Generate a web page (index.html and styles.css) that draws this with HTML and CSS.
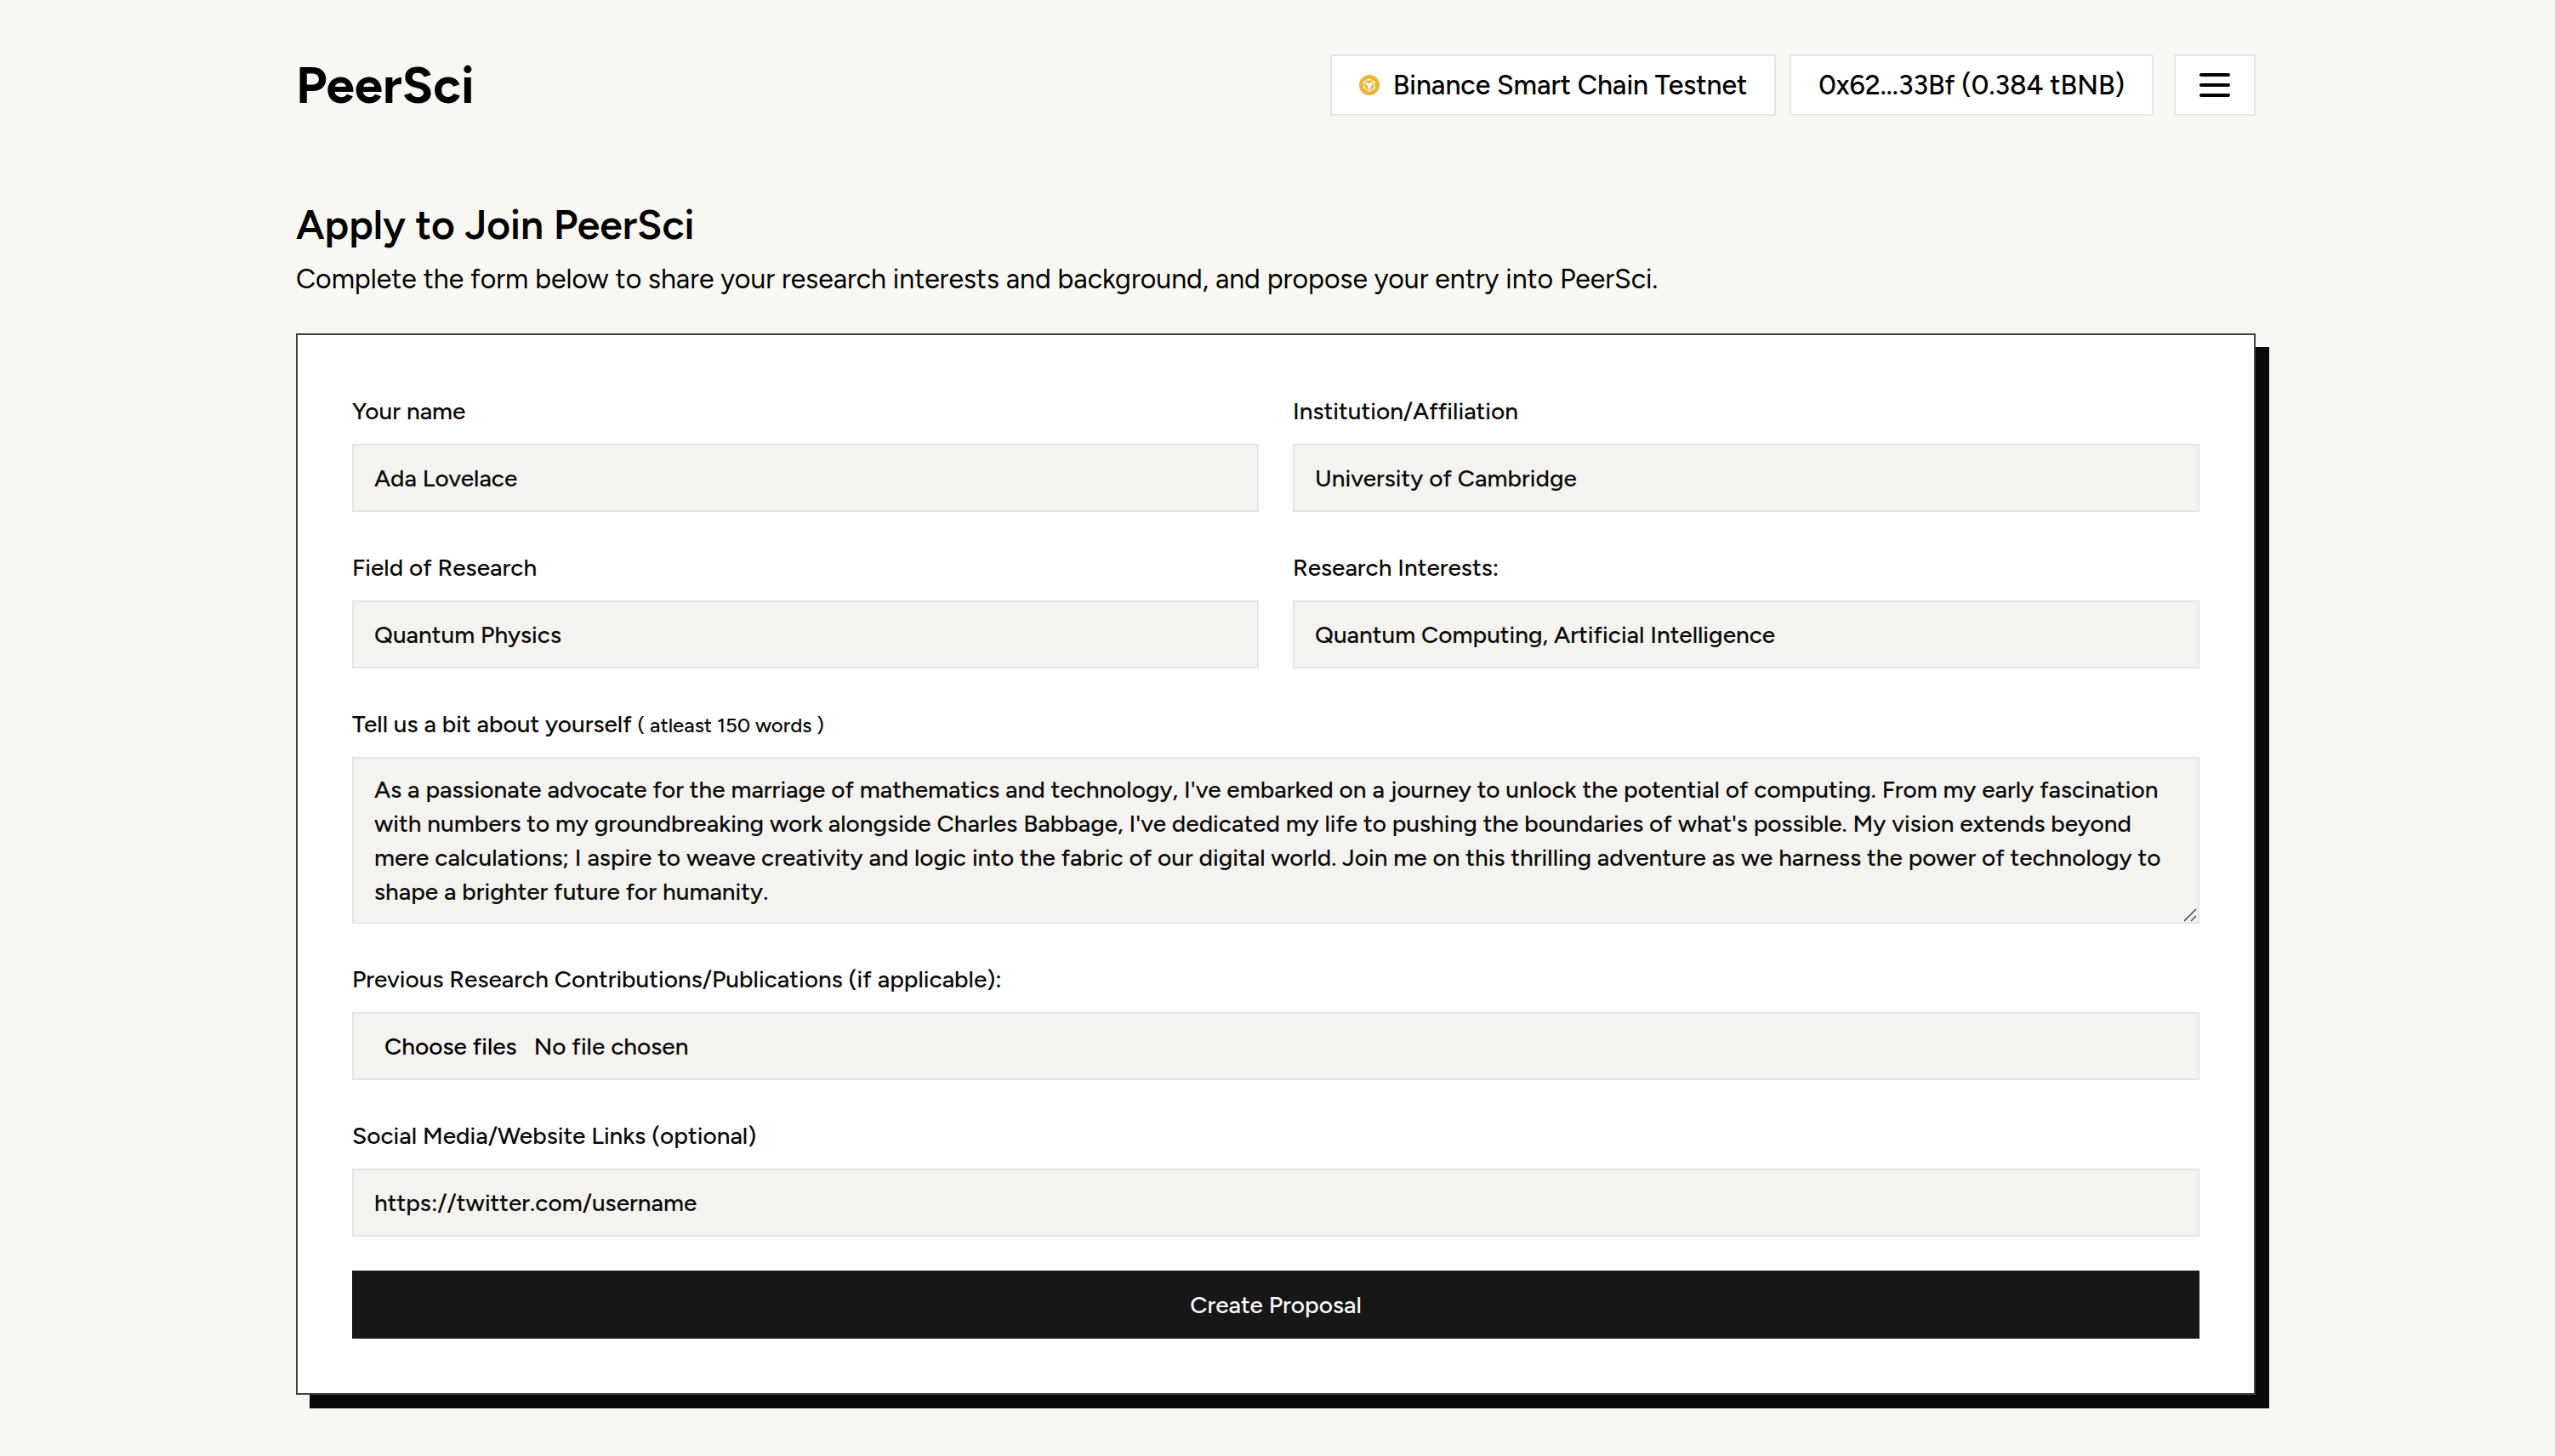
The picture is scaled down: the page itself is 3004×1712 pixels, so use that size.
FILE: index.html
```html
<!DOCTYPE html>
<html lang="en">
<head>
<meta charset="utf-8">
<meta name="viewport" content="width=device-width, initial-scale=1">
<title>PeerSci</title>
<link rel="stylesheet" href="styles.css">
</head>
<body>
<div class="page">
  <header class="header">
    <a class="logo" href="#">PeerSci</a>
    <nav class="nav">
      <div class="wallet">
        <button class="pill" type="button">
          <svg class="coin" viewBox="0 0 24 24" aria-hidden="true">
            <circle cx="12" cy="12" r="12" fill="#e8b73d"/>
            <path d="M12 5 18 8.500V15.500L12 19 6 15.500V8.500Z" fill="none" stroke="#fff" stroke-width="1.400" stroke-dasharray="5.900 1.050" stroke-dashoffset="2.950"/>
            <path d="M8 9.600 9.800 8.900 12 10.200 14.200 8.900 16 9.600V11.400L13.700 12.800V15.800L12 16.800 10.300 15.800V12.800L8 11.400Z" fill="#fff"/>
          </svg>
          <span>Binance Smart Chain Testnet</span>
        </button>
        <button class="pill" type="button">0x62...33Bf (0.384 tBNB)</button>
      </div>
      <button class="pill menu" type="button" aria-label="Menu">
        <svg class="bars" viewBox="0 0 48 48" aria-hidden="true">
          <path d="M8 12H40M8 24H40M8 36H40" fill="none" stroke="#000" stroke-width="4" stroke-linecap="round"/>
        </svg>
      </button>
    </nav>
  </header>

  <main>
    <h1 class="title">Apply to Join PeerSci</h1>
    <p class="subtitle">Complete the form below to share your research interests and background, and propose your entry into PeerSci.</p>

    <form class="card">
      <div class="row">
        <div class="group">
          <label class="label" for="name">Your name</label>
          <input class="field" id="name" type="text" value="Ada Lovelace">
        </div>
        <div class="group">
          <label class="label" for="institution">Institution/Affiliation</label>
          <input class="field" id="institution" type="text" value="University of Cambridge">
        </div>
      </div>
      <div class="row">
        <div class="group">
          <label class="label" for="research">Field of Research</label>
          <input class="field" id="research" type="text" value="Quantum Physics">
        </div>
        <div class="group">
          <label class="label" for="interests">Research Interests:</label>
          <input class="field" id="interests" type="text" value="Quantum Computing, Artificial Intelligence">
        </div>
      </div>
      <div class="group">
        <label class="label" for="about">Tell us a bit about yourself <span class="hint">( atleast 150 words )</span></label>
        <div class="overlay-box">
          <textarea class="field about" id="about" rows="4">As a passionate advocate for the marriage of mathematics and technology, I've embarked on a journey to unlock the potential of computing. From my early fascination with numbers to my groundbreaking work alongside Charles Babbage, I've dedicated my life to pushing the boundaries of what's possible. My vision extends beyond mere calculations; I aspire to weave creativity and logic into the fabric of our digital world. Join me on this thrilling adventure as we harness the power of technology to shape a brighter future for humanity.</textarea>
          <svg class="grip" viewBox="0 0 16 16" aria-hidden="true">
            <path d="M1 16 15 2M9 16 15 10" fill="none" stroke="#fff" stroke-width="1"/>
            <path d="M0 15 14 1M8 15 14 9" fill="none" stroke="#505050" stroke-width="1.700"/>
          </svg>
        </div>
      </div>
      <div class="group">
        <label class="label" for="publications">Previous Research Contributions/Publications (if applicable):</label>
        <div class="field overlay-box file">
          <span class="file-button">Choose files</span>
          <span>No file chosen</span>
          <input class="file-input" id="publications" type="file" multiple>
        </div>
      </div>
      <div class="group">
        <label class="label" for="links">Social Media/Website Links (optional)</label>
        <input class="field" id="links" type="text" value="https://twitter.com/username">
      </div>
      <button class="submit" type="submit">Create Proposal</button>
    </form>
  </main>
</div>
</body>
</html>
```
FILE: styles.css
```css
* {
  box-sizing: border-box;
}

body {
  margin: 0;
  padding-right: 4px;
  background: #f8f7f2;
  color: #0a0a0a;
  font-family: Figtree, Lato, sans-serif;
  font-size: 28px;
  font-weight: 500;
}

button,
input,
textarea {
  font: inherit;
  color: inherit;
}

button {
  cursor: pointer;
}

.page {
  max-width: 2304px;
  margin: 0 auto;
  padding: 64px 0;
}

.header {
  display: flex;
  align-items: center;
  justify-content: space-between;
  margin-bottom: 96px;
}

.logo {
  color: #000;
  font-size: 60px;
  font-weight: 700;
  line-height: 72px;
  text-decoration: none;
}

.nav {
  display: flex;
  gap: 24px;
}

.wallet {
  display: flex;
  gap: 16px;
}

.pill {
  display: flex;
  align-items: center;
  justify-content: center;
  gap: 16px;
  height: 72px;
  padding: 0 32px;
  border: 2px solid #e5e5e5;
  background: #fff;
  color: #000;
  font-size: 32px;
}

.coin {
  width: 24px;
  height: 24px;
}

.menu {
  width: 96px;
  padding: 0;
}

.bars {
  width: 48px;
  height: 48px;
}

.title {
  margin: 0;
  color: #000;
  font-size: 48px;
  font-weight: 600;
  line-height: 64px;
}

.subtitle {
  margin: 8px 0 40px;
  color: #000;
  font-size: 32px;
  font-weight: 400;
  line-height: 48px;
}

.card {
  display: flex;
  flex-direction: column;
  gap: 40px;
  padding: 64px;
  border: 2px solid #404040;
  background: #fff;
  box-shadow: 16px 16px 0 #0a0a0a;
}

.row {
  display: grid;
  grid-template-columns: 1fr 1fr;
  gap: 40px;
}

.group {
  display: flex;
  flex-direction: column;
  gap: 14px;
}

.label {
  line-height: 50px;
}

.hint {
  font-size: 24px;
  line-height: 24px;
}

.field {
  display: block;
  width: 100%;
  height: 80px;
  padding: 16px 24px;
  border: 2px solid #e5e5e5;
  border-radius: 0;
  background: #f4f3ef;
  line-height: 40px;
}

.overlay-box {
  position: relative;
}

.about {
  height: auto;
  overflow: hidden;
  resize: none;
}

.grip {
  position: absolute;
  right: 2px;
  bottom: 2px;
  width: 16px;
  height: 16px;
}

.file {
  display: flex;
  align-items: center;
  gap: 8px;
}

.file-button {
  padding: 0 12px;
  color: #000;
}

.file-input {
  position: absolute;
  inset: 0;
  opacity: 0;
}

.submit {
  height: 80px;
  border: 0;
  background: #171717;
  color: #fafafa;
}
```
